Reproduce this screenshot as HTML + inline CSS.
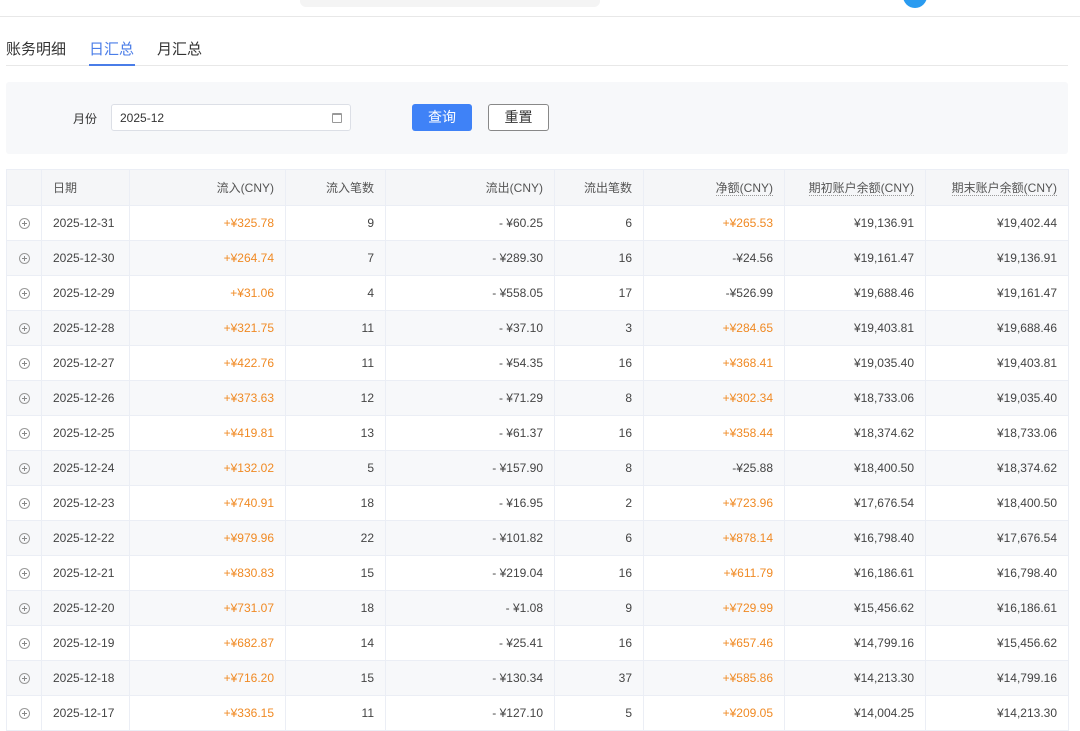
<!DOCTYPE html>
<html><head><meta charset="utf-8"><style>
*{margin:0;padding:0;box-sizing:border-box}
body{width:1080px;height:727px;overflow:hidden;background:#fff;font-family:"Liberation Sans","Noto Sans CJK SC",sans-serif;color:#333;position:relative}
.top{position:absolute;left:0;top:0;width:1080px;height:17px;border-bottom:1px solid #e8e8e8}
.topbar{position:absolute;left:300px;top:0;width:300px;height:7px;background:#f4f4f4;border-radius:0 0 6px 6px}
.av{position:absolute;left:903px;top:-16px;width:24px;height:24px;border-radius:50%;background:#2a9bf0}
.tabs{position:absolute;left:6px;top:38px;font-size:15px;color:#333}
.tabs span{position:absolute;white-space:nowrap}
.tabline{position:absolute;left:6px;top:65px;width:1062px;border-top:1px solid #e8e8e8}
.ul{position:absolute;left:89px;top:64px;width:46px;height:2px;background:#4a7de8}
.panel{position:absolute;left:6px;top:82px;width:1062px;height:72px;background:#f7f8fa;border-radius:3px}
.lbl{position:absolute;left:73px;top:110px;font-size:12px;color:#333}
.inp{position:absolute;left:111px;top:104px;width:240px;height:27px;background:#fff;border:1px solid #dcdfe6;border-radius:3px;font-size:12px;padding:6px 8px;color:#333}
.cal{position:absolute;right:8px;top:8px;width:10px;height:10px;border:1px solid #999;border-top-width:2px;border-radius:1px}
.b1{position:absolute;left:412px;top:104px;width:60px;height:27px;background:#3f82f7;color:#fff;font-size:14px;text-align:center;line-height:27px;border-radius:3px}
.b2{position:absolute;left:488px;top:104px;width:61px;height:27px;background:#fff;border:1px solid #888;color:#333;font-size:14px;text-align:center;line-height:25px;border-radius:3px}
table{position:absolute;left:6px;top:169px;width:1062px;border-collapse:collapse;font-size:12px;table-layout:fixed;color:#444}
td,th{border:1px solid #ebeef5;height:35px;padding:0 11px;text-align:right;font-weight:normal;white-space:nowrap}
th{height:36px;background:#f5f6f8;color:#555}
tbody tr:nth-child(even) td{background:#f7f8fa}
td:nth-child(2),th:nth-child(2){text-align:left}
td:first-child{text-align:center;padding:0}
.o{color:#f08a24}
.d{border-bottom:1px dotted #999}
.ic{display:inline-block;width:11px;height:11px;border:1px solid #999;border-radius:50%;position:relative;vertical-align:middle}
.ic:before{content:"";position:absolute;left:2px;top:4px;width:5px;height:1px;background:#888}
.ic:after{content:"";position:absolute;left:4px;top:2px;width:1px;height:5px;background:#888}
</style></head><body>
<div class="top"><div class="topbar"></div><div class="av"></div></div>
<div class="tabs"><span style="left:0">账务明细</span><span style="left:83px;color:#4a7de8">日汇总</span><span style="left:151px">月汇总</span></div>
<div class="tabline"></div><div class="ul"></div>
<div class="panel"></div>
<div class="lbl">月份</div>
<div class="inp">2025-12<div class="cal"></div></div>
<div class="b1">查询</div><div class="b2">重置</div>
<table>
<colgroup><col style="width:35px"><col style="width:88px"><col style="width:156px"><col style="width:100px"><col style="width:169px"><col style="width:89px"><col style="width:141px"><col style="width:141px"><col style="width:143px"></colgroup>
<thead><tr><th></th><th>日期</th><th>流入(CNY)</th><th>流入笔数</th><th>流出(CNY)</th><th>流出笔数</th><th><span class="d">净额(CNY)</span></th><th><span class="d">期初账户余额(CNY)</span></th><th><span class="d">期末账户余额(CNY)</span></th></tr></thead>
<tbody>
<tr><td><i class="ic"></i></td><td>2025-12-31</td><td class="o">+¥325.78</td><td>9</td><td>- ¥60.25</td><td>6</td><td class="o">+¥265.53</td><td>¥19,136.91</td><td>¥19,402.44</td></tr>
<tr><td><i class="ic"></i></td><td>2025-12-30</td><td class="o">+¥264.74</td><td>7</td><td>- ¥289.30</td><td>16</td><td>-¥24.56</td><td>¥19,161.47</td><td>¥19,136.91</td></tr>
<tr><td><i class="ic"></i></td><td>2025-12-29</td><td class="o">+¥31.06</td><td>4</td><td>- ¥558.05</td><td>17</td><td>-¥526.99</td><td>¥19,688.46</td><td>¥19,161.47</td></tr>
<tr><td><i class="ic"></i></td><td>2025-12-28</td><td class="o">+¥321.75</td><td>11</td><td>- ¥37.10</td><td>3</td><td class="o">+¥284.65</td><td>¥19,403.81</td><td>¥19,688.46</td></tr>
<tr><td><i class="ic"></i></td><td>2025-12-27</td><td class="o">+¥422.76</td><td>11</td><td>- ¥54.35</td><td>16</td><td class="o">+¥368.41</td><td>¥19,035.40</td><td>¥19,403.81</td></tr>
<tr><td><i class="ic"></i></td><td>2025-12-26</td><td class="o">+¥373.63</td><td>12</td><td>- ¥71.29</td><td>8</td><td class="o">+¥302.34</td><td>¥18,733.06</td><td>¥19,035.40</td></tr>
<tr><td><i class="ic"></i></td><td>2025-12-25</td><td class="o">+¥419.81</td><td>13</td><td>- ¥61.37</td><td>16</td><td class="o">+¥358.44</td><td>¥18,374.62</td><td>¥18,733.06</td></tr>
<tr><td><i class="ic"></i></td><td>2025-12-24</td><td class="o">+¥132.02</td><td>5</td><td>- ¥157.90</td><td>8</td><td>-¥25.88</td><td>¥18,400.50</td><td>¥18,374.62</td></tr>
<tr><td><i class="ic"></i></td><td>2025-12-23</td><td class="o">+¥740.91</td><td>18</td><td>- ¥16.95</td><td>2</td><td class="o">+¥723.96</td><td>¥17,676.54</td><td>¥18,400.50</td></tr>
<tr><td><i class="ic"></i></td><td>2025-12-22</td><td class="o">+¥979.96</td><td>22</td><td>- ¥101.82</td><td>6</td><td class="o">+¥878.14</td><td>¥16,798.40</td><td>¥17,676.54</td></tr>
<tr><td><i class="ic"></i></td><td>2025-12-21</td><td class="o">+¥830.83</td><td>15</td><td>- ¥219.04</td><td>16</td><td class="o">+¥611.79</td><td>¥16,186.61</td><td>¥16,798.40</td></tr>
<tr><td><i class="ic"></i></td><td>2025-12-20</td><td class="o">+¥731.07</td><td>18</td><td>- ¥1.08</td><td>9</td><td class="o">+¥729.99</td><td>¥15,456.62</td><td>¥16,186.61</td></tr>
<tr><td><i class="ic"></i></td><td>2025-12-19</td><td class="o">+¥682.87</td><td>14</td><td>- ¥25.41</td><td>16</td><td class="o">+¥657.46</td><td>¥14,799.16</td><td>¥15,456.62</td></tr>
<tr><td><i class="ic"></i></td><td>2025-12-18</td><td class="o">+¥716.20</td><td>15</td><td>- ¥130.34</td><td>37</td><td class="o">+¥585.86</td><td>¥14,213.30</td><td>¥14,799.16</td></tr>
<tr><td><i class="ic"></i></td><td>2025-12-17</td><td class="o">+¥336.15</td><td>11</td><td>- ¥127.10</td><td>5</td><td class="o">+¥209.05</td><td>¥14,004.25</td><td>¥14,213.30</td></tr>
</tbody></table>
</body></html>
